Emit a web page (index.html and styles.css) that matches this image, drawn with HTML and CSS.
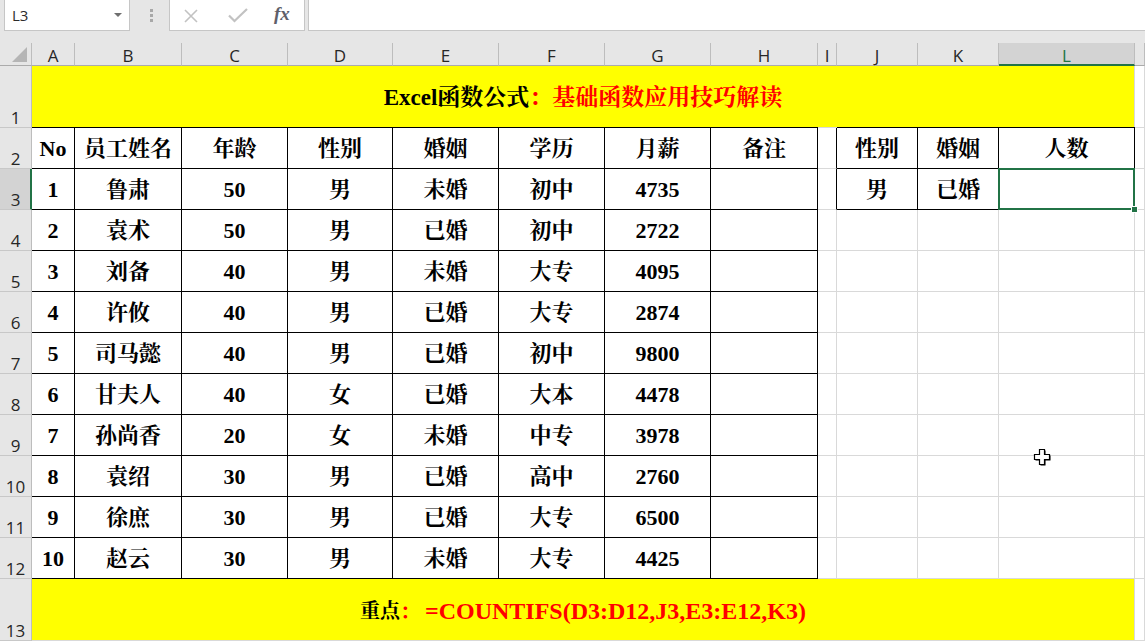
FILE: index.html
```html
<!DOCTYPE html>
<html lang="zh">
<head>
<meta charset="utf-8">
<title>Excel</title>
<link rel="stylesheet" href="styles.css">
</head>
<body>
<div class="app">
  <div class="toolbar">
    <div class="namebox"><span class="ref">L3</span><span class="caret"></span></div>
    <div class="grip"><i></i><i></i><i></i></div>
    <div class="fbtns">
      <svg class="ico-x" width="14" height="14" viewBox="0 0 14 14"><path d="M1 1L13 13M13 1L1 13" stroke="#c2c2c2" stroke-width="1.6" fill="none"/></svg>
      <svg class="ico-ok" width="20" height="15" viewBox="0 0 20 15"><path d="M1 7.5L6.5 13L19 1" stroke="#c2c2c2" stroke-width="2.2" fill="none"/></svg>
      <span class="fx">fx</span>
    </div>
    <div class="finput"></div>
  </div>

  <div class="sheet">
    <!-- header row -->
    <div class="cell corner"><span class="tri"></span></div>
    <div class="cell hd">A</div>
    <div class="cell hd">B</div>
    <div class="cell hd">C</div>
    <div class="cell hd">D</div>
    <div class="cell hd">E</div>
    <div class="cell hd">F</div>
    <div class="cell hd">G</div>
    <div class="cell hd">H</div>
    <div class="cell hd">I</div>
    <div class="cell hd">J</div>
    <div class="cell hd">K</div>
    <div class="cell hd on">L</div>
    <div class="cell hd"></div>

    <!-- row 1 -->
    <div class="cell rn">1</div>
    <div class="cell merge title">Excel函数公式<span class="red">：基础函数应用技巧解读</span></div>
    <div class="cell"></div>

    <!-- row 2 -->
    <div class="cell rn">2</div>
    <div class="cell tb tt">No</div>
    <div class="cell tb tt">员工姓名</div>
    <div class="cell tb tt">年龄</div>
    <div class="cell tb tt">性别</div>
    <div class="cell tb tt">婚姻</div>
    <div class="cell tb tt">学历</div>
    <div class="cell tb tt">月薪</div>
    <div class="cell tb tt">备注</div>
    <div class="cell br"></div>
    <div class="cell tb tt">性别</div>
    <div class="cell tb tt">婚姻</div>
    <div class="cell tb tt">人数</div>
    <div class="cell"></div>

    <!-- row 3 -->
    <div class="cell rn on">3</div>
    <div class="cell tb">1</div>
    <div class="cell tb">鲁肃</div>
    <div class="cell tb">50</div>
    <div class="cell tb">男</div>
    <div class="cell tb">未婚</div>
    <div class="cell tb">初中</div>
    <div class="cell tb">4735</div>
    <div class="cell tb"></div>
    <div class="cell br"></div>
    <div class="cell tb">男</div>
    <div class="cell tb">已婚</div>
    <div class="cell tb sel"><span class="handle"></span></div>
    <div class="cell"></div>

    <!-- row 4 -->
    <div class="cell rn">4</div>
    <div class="cell tb">2</div>
    <div class="cell tb">袁术</div>
    <div class="cell tb">50</div>
    <div class="cell tb">男</div>
    <div class="cell tb">已婚</div>
    <div class="cell tb">初中</div>
    <div class="cell tb">2722</div>
    <div class="cell tb"></div>
    <div class="cell"></div>
    <div class="cell"></div>
    <div class="cell"></div>
    <div class="cell"></div>
    <div class="cell"></div>

    <!-- row 5 -->
    <div class="cell rn">5</div>
    <div class="cell tb">3</div>
    <div class="cell tb">刘备</div>
    <div class="cell tb">40</div>
    <div class="cell tb">男</div>
    <div class="cell tb">未婚</div>
    <div class="cell tb">大专</div>
    <div class="cell tb">4095</div>
    <div class="cell tb"></div>
    <div class="cell"></div>
    <div class="cell"></div>
    <div class="cell"></div>
    <div class="cell"></div>
    <div class="cell"></div>

    <!-- row 6 -->
    <div class="cell rn">6</div>
    <div class="cell tb">4</div>
    <div class="cell tb">许攸</div>
    <div class="cell tb">40</div>
    <div class="cell tb">男</div>
    <div class="cell tb">已婚</div>
    <div class="cell tb">大专</div>
    <div class="cell tb">2874</div>
    <div class="cell tb"></div>
    <div class="cell"></div>
    <div class="cell"></div>
    <div class="cell"></div>
    <div class="cell"></div>
    <div class="cell"></div>

    <!-- row 7 -->
    <div class="cell rn">7</div>
    <div class="cell tb">5</div>
    <div class="cell tb">司马懿</div>
    <div class="cell tb">40</div>
    <div class="cell tb">男</div>
    <div class="cell tb">已婚</div>
    <div class="cell tb">初中</div>
    <div class="cell tb">9800</div>
    <div class="cell tb"></div>
    <div class="cell"></div>
    <div class="cell"></div>
    <div class="cell"></div>
    <div class="cell"></div>
    <div class="cell"></div>

    <!-- row 8 -->
    <div class="cell rn">8</div>
    <div class="cell tb">6</div>
    <div class="cell tb">甘夫人</div>
    <div class="cell tb">40</div>
    <div class="cell tb">女</div>
    <div class="cell tb">已婚</div>
    <div class="cell tb">大本</div>
    <div class="cell tb">4478</div>
    <div class="cell tb"></div>
    <div class="cell"></div>
    <div class="cell"></div>
    <div class="cell"></div>
    <div class="cell"></div>
    <div class="cell"></div>

    <!-- row 9 -->
    <div class="cell rn">9</div>
    <div class="cell tb">7</div>
    <div class="cell tb">孙尚香</div>
    <div class="cell tb">20</div>
    <div class="cell tb">女</div>
    <div class="cell tb">未婚</div>
    <div class="cell tb">中专</div>
    <div class="cell tb">3978</div>
    <div class="cell tb"></div>
    <div class="cell"></div>
    <div class="cell"></div>
    <div class="cell"></div>
    <div class="cell"></div>
    <div class="cell"></div>

    <!-- row 10 -->
    <div class="cell rn">10</div>
    <div class="cell tb">8</div>
    <div class="cell tb">袁绍</div>
    <div class="cell tb">30</div>
    <div class="cell tb">男</div>
    <div class="cell tb">已婚</div>
    <div class="cell tb">高中</div>
    <div class="cell tb">2760</div>
    <div class="cell tb"></div>
    <div class="cell"></div>
    <div class="cell"></div>
    <div class="cell"></div>
    <div class="cell"></div>
    <div class="cell"></div>

    <!-- row 11 -->
    <div class="cell rn">11</div>
    <div class="cell tb">9</div>
    <div class="cell tb">徐庶</div>
    <div class="cell tb">30</div>
    <div class="cell tb">男</div>
    <div class="cell tb">已婚</div>
    <div class="cell tb">大专</div>
    <div class="cell tb">6500</div>
    <div class="cell tb"></div>
    <div class="cell"></div>
    <div class="cell"></div>
    <div class="cell"></div>
    <div class="cell"></div>
    <div class="cell"></div>

    <!-- row 12 -->
    <div class="cell rn">12</div>
    <div class="cell tb">10</div>
    <div class="cell tb">赵云</div>
    <div class="cell tb">30</div>
    <div class="cell tb">男</div>
    <div class="cell tb">未婚</div>
    <div class="cell tb">大专</div>
    <div class="cell tb">4425</div>
    <div class="cell tb"></div>
    <div class="cell"></div>
    <div class="cell"></div>
    <div class="cell"></div>
    <div class="cell"></div>
    <div class="cell"></div>

    <!-- row 13 -->
    <div class="cell rn">13</div>
    <div class="cell merge foot"><span class="k">重点</span><span class="red"><span class="k">：</span><span class="f">=COUNTIFS(D3:D12,J3,E3:E12,K3)</span></span></div>
    <div class="cell"></div>
  </div>

  <svg class="cursor" width="18" height="18" viewBox="0 0 18 18">
    <path d="M6.5 1.5H11.5V6.5H16.5V11.5H11.5V16.5H6.5V11.5H1.5V6.5H6.5Z" fill="#000" transform="translate(1 1)"/>
    <path d="M6.5 1.5H11.5V6.5H16.5V11.5H11.5V16.5H6.5V11.5H1.5V6.5H6.5Z" fill="#fff" stroke="#000" stroke-width="1.2"/>
  </svg>
</div>
</body>
</html>
```

FILE: styles.css
```css
html, body {
  margin: 0;
  padding: 0;
  background: #fff;
}
body {
  width: 1145px;
  height: 642px;
  overflow: hidden;
  font-family: "Liberation Serif", "Noto Serif CJK SC", "Noto Sans CJK SC", serif;
}
.app {
  position: relative;
  width: 1145px;
  height: 642px;
}

/* ---------- toolbar ---------- */
.toolbar {
  height: 43px;
  background: #e6e6e6;
  display: flex;
  align-items: flex-start;
}
.namebox {
  margin-left: 4px;
  width: 126px;
  height: 31px;
  box-sizing: border-box;
  background: #fff;
  border: 1px solid #c6c6c6;
  border-top: 0;
  display: flex;
  align-items: center;
  justify-content: space-between;
  padding: 0 7px 1px 7px;
}
.ref {
  font-family: "Open Sans", "Liberation Sans", sans-serif;
  font-size: 15px;
  color: #2b2b2b;
}
.caret {
  width: 0;
  height: 0;
  border-left: 4px solid transparent;
  border-right: 4px solid transparent;
  border-top: 4px solid #6f6f6f;
}
.grip {
  width: 39px;
  height: 30px;
  display: flex;
  flex-direction: column;
  align-items: center;
  justify-content: center;
  gap: 2px;
  padding-left: 3px;
  box-sizing: border-box;
}
.grip i {
  display: block;
  width: 3px;
  height: 3px;
  background: #a8a8a8;
}
.fbtns {
  width: 136px;
  height: 31px;
  box-sizing: border-box;
  background: #fff;
  border: 1px solid #c6c6c6;
  border-top: 0;
  display: flex;
  align-items: center;
  padding-left: 14px;
}
.ico-x {
  margin-top: 1px;
}
.ico-ok {
  margin-left: 30px;
  margin-top: 1px;
}
.fx {
  margin-left: 26px;
  font-family: "Liberation Serif", serif;
  font-style: italic;
  font-weight: bold;
  font-size: 19px;
  color: #5f5f6b;
  margin-top: -2px;
}
.finput {
  flex: 1;
  margin-left: 3px;
  height: 31px;
  box-sizing: border-box;
  background: #fff;
  border-left: 1px solid #c6c6c6;
  border-bottom: 1px solid #c6c6c6;
}

/* ---------- sheet grid ---------- */
.sheet {
  display: grid;
  grid-template-columns: 32px 43px 107px 106px 105px 106px 106px 106px 107px 19px 81px 81px 136px 10px;
  grid-template-rows: 23px 62px repeat(11, 41px) 62px;
}
.cell {
  box-sizing: border-box;
  border-right: 1px solid #d9d9d9;
  border-bottom: 1px solid #d9d9d9;
  display: flex;
  align-items: center;
  justify-content: center;
  font-size: 22px;
  font-weight: bold;
  color: #000;
  line-height: 1;
  white-space: nowrap;
  padding-top: 2px;
}

/* headers */
.corner {
  background: #e6e6e6;
  border-right: 1px solid #bdbdbd;
  border-bottom: 1px solid #ababab;
  position: relative;
}
.tri {
  position: absolute;
  right: 4px;
  bottom: 3px;
  width: 0;
  height: 0;
  border-left: 15px solid transparent;
  border-bottom: 15px solid #b5b5b5;
}
.hd {
  background: #e6e6e6;
  border-right: 1px solid #bdbdbd;
  border-bottom: 1px solid #ababab;
  font-family: "Open Sans", "Liberation Sans", sans-serif;
  font-weight: normal;
  font-size: 17px;
  color: #262626;
  padding-top: 2px;
}
.hd.on {
  background: #d3d3d3;
  color: #217346;
  border-bottom: 2px solid #217346;
  padding-top: 3px;
}
.rn {
  background: #e6e6e6;
  border-right: 1px solid #bdbdbd;
  border-bottom: 1px solid #c8c8c8;
  font-family: "Open Sans", "Liberation Sans", sans-serif;
  font-weight: normal;
  font-size: 17px;
  color: #262626;
  align-items: flex-end;
  padding-top: 0;
  padding-bottom: 1px;
}
.rn.on {
  background: #d3d3d3;
  border-right: 2px solid #217346;
  padding-left: 1px;
}

/* merged yellow rows */
.merge {
  grid-column: 2 / span 12;
  background: #ffff00;
}
.title {
  font-size: 23px;
}
.red {
  color: #ff0000;
}
.foot .k {
  font-size: 20px;
}
.foot .f {
  font-size: 24px;
  margin-left: 5px;
}

/* bordered tables */
.tb {
  border-right-color: #000;
  border-bottom-color: #000;
}
.tt {
  box-shadow: 0 -1px 0 #000;
}
.br {
  border-right-color: #000;
}

/* selected cell */
.sel {
  position: relative;
}
.sel::after {
  content: "";
  position: absolute;
  left: -1px;
  top: -1px;
  right: -1px;
  bottom: -1px;
  border: 2px solid #217346;
}
.handle {
  position: absolute;
  right: -4px;
  bottom: -4px;
  width: 5px;
  height: 5px;
  background: #217346;
  border: 1px solid #fff;
  z-index: 2;
}

/* mouse cursor */
.cursor {
  position: absolute;
  left: 1033px;
  top: 448px;
}
```
